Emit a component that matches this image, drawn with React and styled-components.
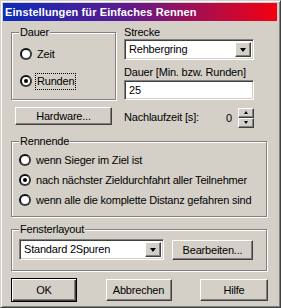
import React, { useState } from "react";
import styled, { createGlobalStyle } from "styled-components";

export default function App() {
  const [dauer, setDauer] = useState("runden");
  const [ende, setEnde] = useState(1);

  const endOptions = [
    "wenn Sieger im Ziel ist",
    "nach nächster Zieldurchfahrt aller Teilnehmer",
    "wenn alle die komplette Distanz gefahren sind",
  ];

  return (
    <>
      <GlobalStyle />
      <Window>
        <TitleBar>Einstellungen für Einfaches Rennen</TitleBar>
        <Body>
          <TopRow>
            <LeftCol>
              <Group $w={105}>
                <Legend>Dauer</Legend>
                <DauerList>
                  <RadioRow onClick={() => setDauer("zeit")}>
                    <RadioCircle $checked={dauer === "zeit"} />
                    <RadioLabel>Zeit</RadioLabel>
                  </RadioRow>
                  <RadioRow onClick={() => setDauer("runden")}>
                    <RadioCircle $checked={dauer === "runden"} />
                    <RadioLabel $focus>Runden</RadioLabel>
                  </RadioRow>
                </DauerList>
              </Group>
              <Button $w={97} $h={18} $ml={4}>
                Hardware...
              </Button>
            </LeftCol>
            <RightCol>
              <FieldLabel>Strecke</FieldLabel>
              <Combo $w={130}>
                <ComboText>Rehbergring</ComboText>
                <DropButton>
                  <Arrow />
                </DropButton>
              </Combo>
              <FieldLabel $mt={6} $mb={1}>
                Dauer [Min. bzw. Runden]
              </FieldLabel>
              <Edit>25</Edit>
              <SpinRow>
                <SpinLabel>Nachlaufzeit [s]:</SpinLabel>
                <SpinValue>0</SpinValue>
                <Spinner>
                  <SpinButton>
                    <SmallArrow $up />
                  </SpinButton>
                  <SpinButton>
                    <SmallArrow />
                  </SpinButton>
                </Spinner>
              </SpinRow>
            </RightCol>
          </TopRow>

          <Group $mt={7}>
            <Legend>Rennende</Legend>
            <EndList>
              {endOptions.map((text, i) => (
                <RadioRow key={i} onClick={() => setEnde(i)}>
                  <RadioCircle $checked={ende === i} />
                  <RadioLabel>{text}</RadioLabel>
                </RadioRow>
              ))}
            </EndList>
          </Group>

          <Group $mt={6}>
            <Legend>Fensterlayout</Legend>
            <LayoutRow>
              <Combo $w={145}>
                <ComboText>Standard 2Spuren</ComboText>
                <DropButton>
                  <Arrow />
                </DropButton>
              </Combo>
              <Button $w={81} $h={20}>
                Bearbeiten...
              </Button>
            </LayoutRow>
          </Group>

          <ButtonRow>
            <DefaultButton>OK</DefaultButton>
            <Button $w={66} $h={22}>
              Abbrechen
            </Button>
            <Button $w={68} $h={22}>
              Hilfe
            </Button>
          </ButtonRow>
        </Body>
      </Window>
    </>
  );
}

const GlobalStyle = createGlobalStyle`
  html, body {
    margin: 0;
    padding: 0;
    background: #d4d0c8;
  }
  body {
    font-family: "Liberation Sans", Arial, sans-serif;
    font-size: 11px;
    color: #000;
  }
`;

export const Window = styled.div`
  width: 281px;
  height: 308px;
  box-sizing: border-box;
  background: #d4d0c8;
  border: 1px solid;
  border-color: #d4d0c8 #404040 #404040 #d4d0c8;
  box-shadow: inset 1px 1px #fff, inset -1px -1px #808080;
  padding: 2px 3px 3px 2px;
  display: flex;
  flex-direction: column;
`;

export const TitleBar = styled.div`
  height: 18px;
  line-height: 18px;
  padding-left: 2px;
  background: linear-gradient(to right, #0c2cb8 0%, #5e1b8e 45%, #f40010 100%);
  color: #fff;
  font-weight: bold;
  font-size: 11px;
  letter-spacing: 0.1px;
  white-space: nowrap;
`;

export const Body = styled.div`
  padding: 5px 9px 0 8px;
  display: flex;
  flex-direction: column;
  letter-spacing: -0.2px;
`;

export const TopRow = styled.div`
  display: flex;
  gap: 7px;
`;

export const LeftCol = styled.div`
  display: flex;
  flex-direction: column;
  gap: 7px;
`;

export const RightCol = styled.div`
  display: flex;
  flex-direction: column;
  width: 130px;
`;

export const Group = styled.fieldset`
  margin: ${(p) => p.$mt || 0}px 1px 0 0;
  padding: 0;
  min-width: 0;
  box-sizing: border-box;
  width: ${(p) => (p.$w ? `${p.$w}px` : "auto")};
  border: 1px solid #808080;
  box-shadow: 1px 1px 0 #fff, inset 1px 1px 0 #fff;
`;

export const Legend = styled.legend`
  margin-left: 7px;
  padding: 0 1px;
  line-height: 13px;
  background: #d4d0c8;
`;

export const DauerList = styled.div`
  display: flex;
  flex-direction: column;
  gap: 7px;
  padding: 5px 0 8px 8px;
`;

export const EndList = styled.div`
  display: flex;
  flex-direction: column;
  padding: 2px 0 6px 7px;
`;

export const RadioRow = styled.div`
  display: flex;
  align-items: center;
  gap: 4px;
  height: 20px;
  cursor: default;
`;

export const RadioCircle = styled.span`
  width: 12px;
  height: 12px;
  box-sizing: border-box;
  border-radius: 50%;
  border: 2px solid #111;
  border-right-color: #3a3a3a;
  border-bottom-color: #3a3a3a;
  background: #fff;
  display: inline-flex;
  align-items: center;
  justify-content: center;
  flex: none;
  &::after {
    content: "";
    width: 4px;
    height: 4px;
    border-radius: 50%;
    background: #000;
    display: ${(p) => (p.$checked ? "block" : "none")};
  }
`;

export const RadioLabel = styled.span`
  padding: 1px 1px;
  line-height: 13px;
  outline: ${(p) => (p.$focus ? "1px dotted #000" : "none")};
  white-space: nowrap;
`;

export const FieldLabel = styled.div`
  line-height: 13px;
  margin-top: ${(p) => p.$mt || 0}px;
  margin-bottom: ${(p) => p.$mb || 0}px;
`;

const sunken = `
  box-sizing: border-box;
  background: #fff;
  border: 1px solid;
  border-color: #808080 #fff #fff #808080;
  box-shadow: inset 1px 1px #404040, inset -1px -1px #d4d0c8;
`;

const raised = `
  box-sizing: border-box;
  background: #d4d0c8;
  border: 1px solid;
  border-color: #fff #404040 #404040 #fff;
  box-shadow: inset -1px -1px #808080, inset 1px 1px #d4d0c8;
`;

export const Combo = styled.div`
  ${sunken};
  display: flex;
  width: ${(p) => p.$w}px;
  height: 21px;
  padding: 2px;
`;

export const ComboText = styled.span`
  flex: 1;
  padding-left: 2px;
  line-height: 15px;
  white-space: nowrap;
`;

export const DropButton = styled.span`
  ${raised};
  width: 16px;
  display: flex;
  align-items: center;
  justify-content: center;
`;

export const Arrow = styled.span`
  width: 0;
  height: 0;
  border-left: 3.5px solid transparent;
  border-right: 3.5px solid transparent;
  border-top: 4px solid #000;
  margin-top: 1px;
`;

export const Edit = styled.div`
  ${sunken};
  height: 20px;
  padding: 0 4px;
  line-height: 18px;
`;

export const SpinRow = styled.div`
  display: flex;
  align-items: center;
  margin-top: 7px;
  height: 21px;
`;

export const SpinLabel = styled.span`
  flex: 1;
  line-height: 13px;
`;

export const SpinValue = styled.span`
  margin-right: 6px;
`;

export const Spinner = styled.div`
  display: flex;
  flex-direction: column;
  width: 16px;
  height: 20px;
`;

export const SpinButton = styled.span`
  ${raised};
  flex: 1;
  display: flex;
  align-items: center;
  justify-content: center;
`;

export const SmallArrow = styled.span`
  width: 0;
  height: 0;
  border-left: 2.5px solid transparent;
  border-right: 2.5px solid transparent;
  ${(p) =>
    p.$up ? "border-bottom: 3px solid #000;" : "border-top: 3px solid #000;"}
`;

export const Button = styled.button`
  ${raised};
  width: ${(p) => p.$w}px;
  height: ${(p) => p.$h}px;
  margin-left: ${(p) => p.$ml || 0}px;
  padding: 0;
  font-family: inherit;
  font-size: 11px;
  letter-spacing: inherit;
  color: #000;
`;

export const DefaultButton = styled(Button)`
  width: 66px;
  height: 24px;
  border: 1px solid #000;
  box-shadow: inset 1px 1px #fff, inset -1px -1px #404040, inset -2px -2px #808080;
`;

export const LayoutRow = styled.div`
  display: flex;
  align-items: center;
  gap: 8px;
  padding: 3px 0 10px 7px;
`;

export const ButtonRow = styled.div`
  display: flex;
  justify-content: space-between;
  align-items: center;
  margin-top: 7px;
`;
